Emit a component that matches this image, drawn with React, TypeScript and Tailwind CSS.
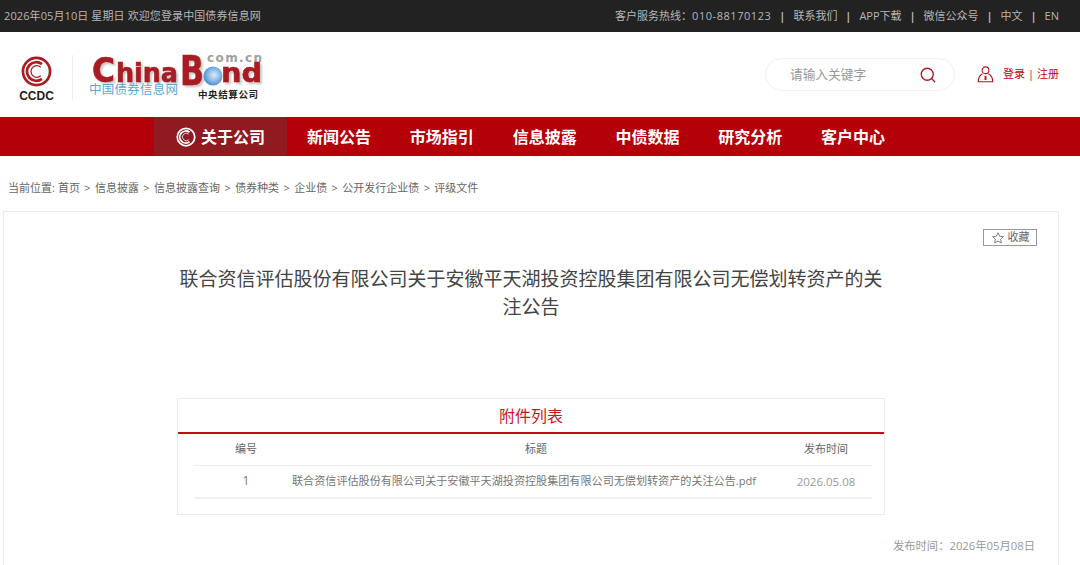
import { Search } from "lucide-react"

const topLinks = ["联系我们", "APP下载", "微信公众号", "中文", "EN"]
const navItems = ["新闻公告", "市场指引", "信息披露", "中债数据", "研究分析", "客户中心"]
const crumbs = ["首页", "信息披露", "信息披露查询", "债券种类", "企业债", "公开发行企业债", "评级文件"]
const font = "font-['Open_Sans','Noto_Sans_CJK_SC',sans-serif]"

function RingMark({ className, color }: { className: string; color: string }) {
  return (
    <svg viewBox="0 0 40 40" className={className} fill="none" stroke={color}>
      <circle cx="20" cy="20" r="17.500" strokeWidth="3.500" />
      <path d="M27 10.500a12 12 0 1 0 0 19" strokeWidth="3.500" />
      <path d="M25.500 14.500a7.500 7.500 0 1 0 0 11" strokeWidth="1.600" />
    </svg>
  )
}

function UserIcon() {
  return (
    <svg viewBox="0 0 20 20" className="h-[17px] w-[17px]" fill="none" stroke="#b5121b" strokeWidth="1.300">
      <circle cx="10" cy="5" r="4" />
      <path d="M6.500 9C3.500 10.500 1.500 13.500 1.500 18.500h17C18.500 13.500 16.500 10.500 13.500 9" />
      <path d="M10 11.500v5" strokeWidth="2.200" />
    </svg>
  )
}

// viewBox uses the page's own coordinates, so each word sits where it sits in the logo
function ChinaBondLogo() {
  const display = "'DejaVu Sans', sans-serif"
  const cjk = "'Noto Sans CJK SC', sans-serif"
  return (
    <svg viewBox="85 50 185 55" className="ml-[12px] mt-[6px] h-[55px] w-[185px] overflow-visible">
      <defs>
        <radialGradient id="ball" cx="55%" cy="45%" r="60%">
          <stop offset="0%" stopColor="#dcebf8" />
          <stop offset="60%" stopColor="#7fb2e2" />
          <stop offset="100%" stopColor="#3f82c8" />
        </radialGradient>
      </defs>
      <text x="207" y="62" textLength="55" fontSize="12" fontWeight="700" fill="#a0a0a0" fontFamily={display}>com.cn</text>
      <g fill="#a81c22" stroke="#a81c22" strokeWidth="0.600" fontWeight="700" fontFamily={display} className="drop-shadow-[2px_2px_1px_#c4c4c4]">
        <text x="92" y="82" textLength="23" lengthAdjust="spacingAndGlyphs" fontSize="34">C</text>
        <text x="116" y="82" textLength="62" lengthAdjust="spacingAndGlyphs" fontSize="27">hina</text>
        <text x="180" y="85" textLength="24" lengthAdjust="spacingAndGlyphs" fontSize="40">B</text>
        <text x="221" y="82" textLength="41" lengthAdjust="spacingAndGlyphs" fontSize="27">nd</text>
      </g>
      <circle cx="213" cy="76" r="9.500" fill="url(#ball)" />
      <text x="89" y="94" textLength="89" fontSize="12.500" fill="#5aa7dc" fontFamily={cjk}>中国债券信息网</text>
      <text x="198" y="98" textLength="60" fontSize="9.500" fontWeight="700" fill="#222222" fontFamily={cjk}>中央结算公司</text>
    </svg>
  )
}

function Logo() {
  return (
    <div className="flex h-full items-center pl-[19px]">
      <div className="mt-[10px] flex w-[35px] flex-col items-center">
        <RingMark className="h-[31px] w-[31px]" color="#a81c22" />
        <span className="mt-[3px] font-['Liberation_Sans',sans-serif] text-[12px] font-bold leading-[13px] text-[#222222]">CCDC</span>
      </div>
      <div className="ml-[18px] mt-[7px] h-[46px] w-px bg-[#eeeeee]" />
      <ChinaBondLogo />
    </div>
  )
}

export default function App() {
  return (
    <div className={`h-[565px] w-[1080px] overflow-hidden bg-white ${font}`}>
      <div className="flex h-[32px] items-center justify-between bg-[#222222] pl-[4px] pr-[21px] text-[11px] text-[#b5b5b5]">
        <span className="tracking-[0.1px]">2026年05月10日 星期日 欢迎您登录中国债券信息网</span>
        <div className="flex items-center">
          <span>
            客户服务热线：<span className="tracking-[0.55px]">010-88170123</span>
          </span>
          {topLinks.map((link) => (
            <span key={link} className="flex items-center">
              <span className="w-[22px] text-center font-bold">|</span>
              <span>{link}</span>
            </span>
          ))}
        </div>
      </div>

      <div className="flex h-[85px] items-center justify-between">
        <Logo />
        <div className="flex items-center pr-[21px]">
          <div className="flex h-[33px] w-[190px] items-center justify-between rounded-full border border-[#f0f0f0] pl-[24px] pr-[17px]">
            <span className="text-[12.700px] text-[#999999]">请输入关键字</span>
            <Search className="h-[18px] w-[18px] text-[#a81c22]" strokeWidth={1.800} />
          </div>
          <div className="ml-[22px] flex items-center text-[11px] text-[#c4000f]">
            <UserIcon />
            <span className="ml-[9px]">登录</span>
            <span className="mx-[3px]">|</span>
            <span>注册</span>
          </div>
        </div>
      </div>

      <nav className="flex h-[39px] items-center bg-[#b40009] pl-[154px] text-[16px] font-bold text-white">
        <div className="flex h-full w-[133px] items-center justify-center gap-[5px] bg-[#8f1a20] pt-[1px]">
          <RingMark className="h-[20px] w-[20px]" color="#ffffff" />
          <span>关于公司</span>
        </div>
        <div className="ml-[20px] flex gap-[38.800px] pt-[1px]">
          {navItems.map((item) => (
            <a key={item}>{item}</a>
          ))}
        </div>
      </nav>

      <div className="flex h-[55px] items-center pl-[8px] pt-[9px] text-[11px] text-[#666666]">
        <span>当前位置: </span>
        {crumbs.map((crumb, i) => (
          <span key={crumb}>
            {i > 0 && <span className="mx-[4.400px]">&gt;</span>}
            {i === 0 && <span className="ml-[3px]" />}
            {crumb}
          </span>
        ))}
      </div>

      <div className="ml-[3px] w-[1056px] border border-[#e8eaf2] bg-white px-[20px] pb-[40px] pt-[17px]">
        <div className="flex justify-end pr-[1px]">
          <button className="flex h-[17px] w-[54px] items-center justify-center gap-[3px] border border-[#999999] text-[11px] text-[#666666]">
            <svg viewBox="0 0 24 24" className="h-[14px] w-[14px]" fill="none" stroke="#777777" strokeWidth="1.600">
              <path d="M12 3l2.800 6 6.400.7-4.800 4.300 1.400 6.500L12 17.200 6.200 20.500 7.600 14 2.800 9.700 9.200 9z" />
            </svg>
            收藏
          </button>
        </div>
        <h1 className="mx-auto mt-[19px] w-[710px] text-center text-[19px] font-normal leading-[28px] text-[#444444]">
          联合资信评估股份有限公司关于安徽平天湖投资控股集团有限公司无偿划转资产的关注公告
        </h1>

        <div className="mx-auto mt-[77px] h-[117px] w-[708px] border border-[#e8eaf2]">
          <div className="flex h-[35px] items-center justify-center border-b-2 border-[#c00d16] text-[16px] text-[#c9171e]">
            附件列表
          </div>
          <div className="pl-[16px] pr-[12px]">
            <table className="w-full table-fixed text-[11px] text-[#666666]">
              <tbody>
                <tr className="h-[31px] border-b border-[#eeeeee]">
                  <td className="w-[98px] pl-[6px] text-center">编号</td>
                  <td className="text-center">标题</td>
                  <td className="w-[92px] text-center">发布时间</td>
                </tr>
                <tr className="h-[33px] border-b-2 border-[#f0f0f0] text-[#777777]">
                  <td className="pl-[6px] text-center text-[12px]">1</td>
                  <td className="whitespace-nowrap text-[11.100px]">联合资信评估股份有限公司关于安徽平天湖投资控股集团有限公司无偿划转资产的关注公告.pdf</td>
                  <td className="text-center text-[11.500px] text-[#999999]">2026.05.08</td>
                </tr>
              </tbody>
            </table>
          </div>
        </div>

        <div className="mt-[22px] pr-[3px] text-right text-[11.300px] leading-[18px] text-[#999999]">发布时间：2026年05月08日</div>
      </div>
    </div>
  )
}
